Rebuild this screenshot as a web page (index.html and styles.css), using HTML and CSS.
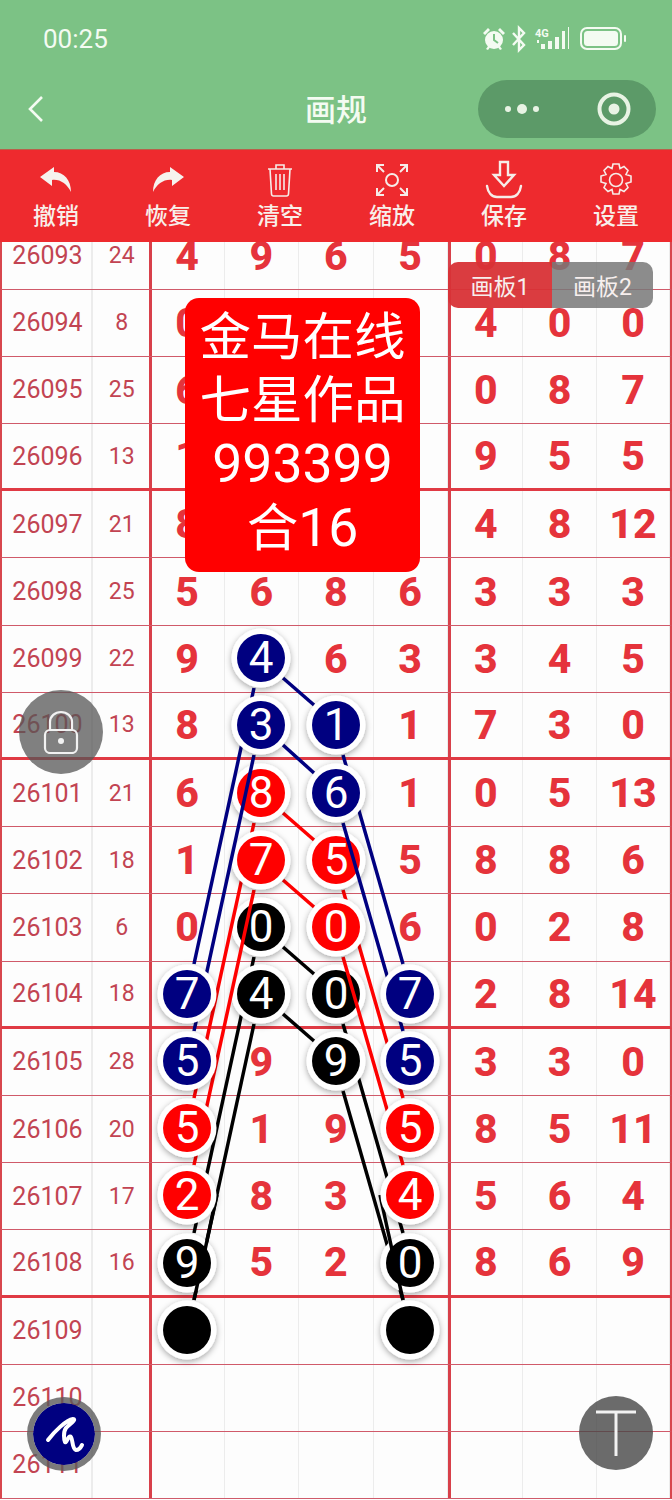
FILE: index.html
```html
<!DOCTYPE html>
<html>
<head>
<meta charset="UTF-8">
<title>画规</title>
<link rel="stylesheet" href="styles.css">
</head>
<body>
<div class="page">

	<div class="topbar">
		<div class="status">
			<span class="clock">00:25</span>
			<div class="status-icons">
				<svg width="146" height="28" viewBox="0 0 146 28">
					<g fill="#f4fbf2" stroke="none">
						<circle cx="13" cy="15" r="9"/>
						<path d="M2 8l5-5 2 2-5 5zM24 8l-5-5-2 2 5 5z"/>
						<path d="M5 24l3-4 2 1-3 4zM21 24l-3-4-2 1 3 4z"/>
					</g>
					<path d="M13 9v6l4 3" fill="none" stroke="#7cc285" stroke-width="2"/>
					<path d="M32 8l11 12-5 5V3l5 5-11 12" fill="none" stroke="#f4fbf2" stroke-width="2.4"/>
					<text x="54" y="12" class="net">4G</text>
					<g fill="#f4fbf2">
						<rect x="56" y="15" width="2" height="3"/>
						<rect x="60" y="19" width="4" height="5"/>
						<rect x="67" y="16" width="4" height="8"/>
						<rect x="74" y="12" width="4" height="12"/>
						<rect x="81" y="6" width="3" height="18"/>
						<rect x="87" y="2" width="1" height="22"/>
					</g>
					<rect x="100" y="3" width="40" height="21" rx="6" fill="none" stroke="#f4fbf2" stroke-width="2"/>
					<rect x="103" y="6" width="34" height="15" rx="3.5" fill="#f4fbf2"/>
					<rect x="143" y="10" width="2" height="7" rx="1" fill="#f4fbf2"/>
				</svg>
			</div>
		</div>
		<div class="nav">
			<svg class="back" width="18" height="28" viewBox="0 0 18 28"><path d="M15 2L3 14l12 12" fill="none" stroke="#f4fbf2" stroke-width="2.6"/></svg>
			<div class="nav-title">画规</div>
			<div class="capsule">
				<svg width="34" height="12" viewBox="0 0 34 12">
					<circle cx="3" cy="6" r="3" fill="#e8f3e4"/>
					<circle cx="17" cy="6" r="5" fill="#e8f3e4"/>
					<circle cx="31" cy="6" r="3" fill="#e8f3e4"/>
				</svg>
				<svg width="34" height="34" viewBox="0 0 34 34">
					<circle cx="17" cy="17" r="14.5" fill="none" stroke="#e8f3e4" stroke-width="4"/>
					<circle cx="17" cy="17" r="5.5" fill="#e8f3e4"/>
				</svg>
			</div>
		</div>
	</div>

	<div class="toolbar">
		<div class="tool">
			<div class="tool-icon"><svg width="34" height="26" viewBox="0 0 34 26"><path d="M15 0L1 10l12 9v-6c8-1 15 4 19 12C32 13 25 5 15 5z" fill="#f6f2ee"/></svg></div>
			<span>撤销</span>
		</div>
		<div class="tool">
			<div class="tool-icon"><svg width="34" height="26" viewBox="0 0 34 26"><path d="M19 0l14 10-12 9v-6C13 12 6 17 2 25 2 13 9 5 19 5z" fill="#f6f2ee"/></svg></div>
			<span>恢复</span>
		</div>
		<div class="tool">
			<div class="tool-icon"><svg width="26" height="34" viewBox="0 0 26 34" fill="none" stroke="#f6ece8" stroke-width="1.6"><path d="M1 6h24M9 6V2h8v4M3 6l1.500 25q.2 2 2 2h13q1.800 0 2-2L23 6M9 11v16M13 11v16M17 11v16"/></svg></div>
			<span>清空</span>
		</div>
		<div class="tool">
			<div class="tool-icon"><svg width="34" height="34" viewBox="0 0 34 34" fill="none" stroke="#f6ece8" stroke-width="2"><circle cx="17" cy="17" r="6"/><path d="M2 9V2h7M32 9V2h-7M2 25v7h7M32 25v7h-7M3 3l6 6M31 3l-6 6M3 31l6-6M31 31l-6-6"/></svg></div>
			<span>缩放</span>
		</div>
		<div class="tool">
			<div class="tool-icon"><svg width="38" height="40" viewBox="0 0 38 40" fill="none" stroke="#f6ece8" stroke-width="2.4"><path d="M15 2h8v13h6L19 26 9 15h6zM2 26c1 7 5 11 10 11h14c5 0 9-4 10-11" stroke-linecap="round"/></svg></div>
			<span>保存</span>
		</div>
		<div class="tool">
			<div class="tool-icon"><svg width="34" height="34" viewBox="0 0 34 34" fill="none" stroke="#f6ece8" stroke-width="1.6"><circle cx="17" cy="17" r="6.500"/><path d="M14 1h6l1 4.500 4-2 4 4-2 4 5 1.500v6l-5 1.500 2 4-4 4-4-2-1 4.500h-6l-1-4.500-4 2-4-4 2-4-5-1.500v-6l5-1.500-2-4 4-4 4 2z"/></svg></div>
			<span>设置</span>
		</div>
	</div>

	<div class="board">
		<div class="rows">
			<div class="row"><div class="no">26093</div><div class="sum">24</div><div class="d g">4</div><div class="d">9</div><div class="d">6</div><div class="d">5</div><div class="d g">0</div><div class="d">8</div><div class="d">7</div></div>
			<div class="row"><div class="no">26094</div><div class="sum">8</div><div class="d g">0</div><div class="d"></div><div class="d"></div><div class="d"></div><div class="d g">4</div><div class="d">0</div><div class="d">0</div></div>
			<div class="row"><div class="no">26095</div><div class="sum">25</div><div class="d g">6</div><div class="d"></div><div class="d"></div><div class="d"></div><div class="d g">0</div><div class="d">8</div><div class="d">7</div></div>
			<div class="row end"><div class="no">26096</div><div class="sum">13</div><div class="d g">1</div><div class="d"></div><div class="d"></div><div class="d"></div><div class="d g">9</div><div class="d">5</div><div class="d">5</div></div>
			<div class="row"><div class="no">26097</div><div class="sum">21</div><div class="d g">8</div><div class="d"></div><div class="d"></div><div class="d"></div><div class="d g">4</div><div class="d">8</div><div class="d">12</div></div>
			<div class="row"><div class="no">26098</div><div class="sum">25</div><div class="d g">5</div><div class="d">6</div><div class="d">8</div><div class="d">6</div><div class="d g">3</div><div class="d">3</div><div class="d">3</div></div>
			<div class="row"><div class="no">26099</div><div class="sum">22</div><div class="d g">9</div><div class="d"></div><div class="d">6</div><div class="d">3</div><div class="d g">3</div><div class="d">4</div><div class="d">5</div></div>
			<div class="row end"><div class="no">26100</div><div class="sum">13</div><div class="d g">8</div><div class="d"></div><div class="d"></div><div class="d">1</div><div class="d g">7</div><div class="d">3</div><div class="d">0</div></div>
			<div class="row"><div class="no">26101</div><div class="sum">21</div><div class="d g">6</div><div class="d"></div><div class="d"></div><div class="d">1</div><div class="d g">0</div><div class="d">5</div><div class="d">13</div></div>
			<div class="row"><div class="no">26102</div><div class="sum">18</div><div class="d g">1</div><div class="d"></div><div class="d"></div><div class="d">5</div><div class="d g">8</div><div class="d">8</div><div class="d">6</div></div>
			<div class="row"><div class="no">26103</div><div class="sum">6</div><div class="d g">0</div><div class="d"></div><div class="d"></div><div class="d">6</div><div class="d g">0</div><div class="d">2</div><div class="d">8</div></div>
			<div class="row end"><div class="no">26104</div><div class="sum">18</div><div class="d g"></div><div class="d"></div><div class="d"></div><div class="d"></div><div class="d g">2</div><div class="d">8</div><div class="d">14</div></div>
			<div class="row"><div class="no">26105</div><div class="sum">28</div><div class="d g"></div><div class="d">9</div><div class="d"></div><div class="d"></div><div class="d g">3</div><div class="d">3</div><div class="d">0</div></div>
			<div class="row"><div class="no">26106</div><div class="sum">20</div><div class="d g"></div><div class="d">1</div><div class="d">9</div><div class="d"></div><div class="d g">8</div><div class="d">5</div><div class="d">11</div></div>
			<div class="row"><div class="no">26107</div><div class="sum">17</div><div class="d g"></div><div class="d">8</div><div class="d">3</div><div class="d"></div><div class="d g">5</div><div class="d">6</div><div class="d">4</div></div>
			<div class="row end"><div class="no">26108</div><div class="sum">16</div><div class="d g"></div><div class="d">5</div><div class="d">2</div><div class="d"></div><div class="d g">8</div><div class="d">6</div><div class="d">9</div></div>
			<div class="row"><div class="no">26109</div><div class="sum"></div><div class="d g"></div><div class="d"></div><div class="d"></div><div class="d"></div><div class="d g"></div><div class="d"></div><div class="d"></div></div>
			<div class="row"><div class="no">26110</div><div class="sum"></div><div class="d g"></div><div class="d"></div><div class="d"></div><div class="d"></div><div class="d g"></div><div class="d"></div><div class="d"></div></div>
			<div class="row"><div class="no">26111</div><div class="sum"></div><div class="d g"></div><div class="d"></div><div class="d"></div><div class="d"></div><div class="d g"></div><div class="d"></div><div class="d"></div></div>
		</div>

		<svg class="marks" width="672" height="1258" viewBox="0 242 672 1258">
			<defs>
				<filter id="soft" x="-30%" y="-30%" width="160%" height="170%"><feDropShadow dx="0" dy="2" stdDeviation="3" flood-color="#000" flood-opacity=".35"/></filter>
				<g id="ring"><circle r="29.500" fill="#fff" filter="url(#soft)"/></g>
			</defs>

			<!-- black group -->
			<g class="lines" stroke="#000">
				<line x1="283" y1="947" x2="314" y2="974"/>
				<line x1="283" y1="1014" x2="314" y2="1041"/>
				<line x1="254" y1="957" x2="194" y2="1233"/>
				<line x1="254" y1="1024" x2="194" y2="1300"/>
				<line x1="343" y1="1024" x2="403" y2="1233"/>
				<line x1="343" y1="1091" x2="403" y2="1300"/>
			</g>
			<g class="ball" fill="#000">
				<use href="#ring" x="261" y="927"/><circle cx="261" cy="927" r="24"/><text x="261" y="942">0</text>
				<use href="#ring" x="336" y="994"/><circle cx="336" cy="994" r="24"/><text x="336" y="1009">0</text>
				<use href="#ring" x="261" y="994"/><circle cx="261" cy="994" r="24"/><text x="261" y="1009">4</text>
				<use href="#ring" x="336" y="1061"/><circle cx="336" cy="1061" r="24"/><text x="336" y="1076">9</text>
				<use href="#ring" x="187" y="1263"/><circle cx="187" cy="1263" r="24"/><text x="187" y="1278">9</text>
				<use href="#ring" x="410" y="1263"/><circle cx="410" cy="1263" r="24"/><text x="410" y="1278">0</text>
				<use href="#ring" x="187" y="1330"/><circle cx="187" cy="1330" r="24"/>
				<use href="#ring" x="410" y="1330"/><circle cx="410" cy="1330" r="24"/>
			</g>
			<g class="lines" stroke="#000">
				<line x1="217" y1="1195" x2="194" y2="1300"/>
				<line x1="380" y1="1195" x2="403" y2="1300"/>
			</g>

			<!-- red group -->
			<g class="lines" stroke="#f00">
				<line x1="283" y1="813" x2="314" y2="840"/>
				<line x1="283" y1="880" x2="314" y2="907"/>
				<line x1="254" y1="823" x2="194" y2="1098"/>
				<line x1="254" y1="890" x2="194" y2="1165"/>
				<line x1="343" y1="890" x2="403" y2="1098"/>
				<line x1="343" y1="957" x2="403" y2="1165"/>
			</g>
			<g class="ball" fill="#f00">
				<use href="#ring" x="261" y="793"/><circle cx="261" cy="793" r="24"/><text x="261" y="808">8</text>
				<use href="#ring" x="261" y="860"/><circle cx="261" cy="860" r="24"/><text x="261" y="875">7</text>
				<use href="#ring" x="336" y="860"/><circle cx="336" cy="860" r="24"/><text x="336" y="875">5</text>
				<use href="#ring" x="336" y="927"/><circle cx="336" cy="927" r="24"/><text x="336" y="942">0</text>
				<use href="#ring" x="187" y="1128"/><circle cx="187" cy="1128" r="24"/><text x="187" y="1143">5</text>
				<use href="#ring" x="410" y="1128"/><circle cx="410" cy="1128" r="24"/><text x="410" y="1143">5</text>
				<use href="#ring" x="187" y="1195"/><circle cx="187" cy="1195" r="24"/><text x="187" y="1210">2</text>
				<use href="#ring" x="410" y="1195"/><circle cx="410" cy="1195" r="24"/><text x="410" y="1210">4</text>
			</g>

			<!-- blue group -->
			<g class="lines" stroke="#000080">
				<line x1="283" y1="678" x2="314" y2="705"/>
				<line x1="283" y1="745" x2="314" y2="773"/>
				<line x1="254" y1="688" x2="194" y2="964"/>
				<line x1="254" y1="755" x2="194" y2="1031"/>
				<line x1="343" y1="755" x2="403" y2="964"/>
				<line x1="343" y1="823" x2="403" y2="1031"/>
			</g>
			<g class="ball" fill="#000080">
				<use href="#ring" x="261" y="658"/><circle cx="261" cy="658" r="24"/><text x="261" y="673">4</text>
				<use href="#ring" x="261" y="725"/><circle cx="261" cy="725" r="24"/><text x="261" y="740">3</text>
				<use href="#ring" x="336" y="725"/><circle cx="336" cy="725" r="24"/><text x="336" y="740">1</text>
				<use href="#ring" x="336" y="793"/><circle cx="336" cy="793" r="24"/><text x="336" y="808">6</text>
				<use href="#ring" x="187" y="994"/><circle cx="187" cy="994" r="24"/><text x="187" y="1009">7</text>
				<use href="#ring" x="410" y="994"/><circle cx="410" cy="994" r="24"/><text x="410" y="1009">7</text>
				<use href="#ring" x="187" y="1061"/><circle cx="187" cy="1061" r="24"/><text x="187" y="1076">5</text>
				<use href="#ring" x="410" y="1061"/><circle cx="410" cy="1061" r="24"/><text x="410" y="1076">5</text>
			</g>
		</svg>

		<div class="tabs">
			<div class="tab on">画板1</div>
			<div class="tab">画板2</div>
		</div>

		<div class="note">金马在线<br>七星作品<br><span class="big">993399</span><br>合<span class="big">16</span></div>

		<div class="fab lock">
			<svg width="36" height="44" viewBox="0 0 36 44" fill="none" stroke="#f2f2f2" stroke-width="2.2"><path d="M7 20v-8a11 10 0 0 1 22 0v8"/><rect x="2" y="20" width="32" height="23" rx="5"/><circle cx="18" cy="31" r="3" fill="#f2f2f2" stroke="none"/></svg>
		</div>
		<div class="fab pen">
			<svg width="44" height="44" viewBox="0 0 44 44" fill="none" stroke="#fff" stroke-width="4" stroke-linecap="round" stroke-linejoin="round"><path d="M6 28C12 20 24 8 31 7c4 0-3 5-7 9-3 4-2 12-1 14 1 2 4-8 6-5 2 3 1 12 5 13 3 0 5-3 6-5"/></svg>
		</div>
		<div class="fab top">
			<svg width="44" height="48" viewBox="0 0 44 48" fill="none" stroke="#f2f2f2" stroke-width="3"><path d="M2 3h40M22 3v44"/></svg>
		</div>
	</div>

</div>
</body>
</html>
```

FILE: styles.css
```css
* {
	box-sizing: border-box;
}

body {
	margin: 0;
	background: #fdfdfd;
	font-family: "Roboto", "Noto Sans CJK SC", sans-serif;
}

.page {
	width: 672px;
	height: 1500px;
	overflow: hidden;
	display: flex;
	flex-direction: column;
}

.topbar {
	height: 150px;
	background: #7cc285;
	border-bottom: 1px solid #b8604a;
	color: #f4fbf2;
	flex: none;
}

.status {
	height: 80px;
	padding: 20px 45px 0 43px;
	display: flex;
	justify-content: space-between;
	align-items: flex-start;
}

.clock {
	font-size: 26px;
	line-height: 38px;
}

.status-icons {
	padding-top: 5px;
}

.net {
	font: bold 11px "Roboto", sans-serif;
	fill: #f4fbf2;
}

.nav {
	height: 58px;
	position: relative;
	display: flex;
	align-items: center;
	justify-content: space-between;
	padding: 0 16px 0 27px;
}

.nav-title {
	position: absolute;
	left: 0;
	right: 0;
	top: 10px;
	text-align: center;
	font-size: 31px;
	font-weight: 500;
	line-height: 42px;
}

.capsule {
	width: 178px;
	height: 58px;
	border-radius: 29px;
	background: #5c9a68;
	display: flex;
	align-items: center;
	justify-content: space-between;
	padding: 0 25px 0 27px;
}

.toolbar {
	height: 92px;
	flex: none;
	background: #ee2a2e;
	display: grid;
	grid-template-columns: repeat(6, 112px);
}

.tool {
	display: flex;
	flex-direction: column;
	align-items: center;
	color: #f8efea;
	font-size: 23px;
	font-weight: 500;
	line-height: 30px;
	padding-top: 10px;
}

.tool-icon {
	height: 40px;
	margin-bottom: 2px;
	display: flex;
	align-items: center;
	justify-content: center;
}

.board {
	flex: 1;
	position: relative;
	overflow: hidden;
}

.rows {
	margin-top: -19.500px;
	width: 672px;
}

.row {
	height: 67.2px;
	display: grid;
	grid-template-columns: 91px 55.500px 76px 74.500px 74.500px 74px 75.500px 74px 73px;
	border-bottom: 1px solid #d05a6a;
	border-left: 2px solid #d8474e;
	border-right: 2px solid #d8474e;
	width: 672px;
}

.row.end {
	border-bottom: 3px solid #e03a44;
}

.no,
.sum,
.d {
	display: flex;
	align-items: center;
	justify-content: center;
	border-right: 2px solid #ececec;
}

.no {
	font-size: 25px;
	color: #c24452;
	padding-left: 2px;
}

.sum {
	font-size: 23px;
	color: #c24452;
	border-right: 0;
	padding-left: 2px;
}

.d {
	font-size: 41px;
	font-weight: 800;
	color: #e5333b;
	border-right-width: 1px;
}

.d.g {
	border-left: 3px solid #d8404a;
	padding-right: 1px;
}

.marks {
	position: absolute;
	left: 0;
	top: 0;
}

.lines line {
	stroke-width: 3.500;
}

.ball text {
	font: 400 44px "Roboto", sans-serif;
	fill: #fff;
	text-anchor: middle;
}

.tabs {
	position: absolute;
	left: 448px;
	top: 20px;
	width: 205px;
	height: 46px;
	display: flex;
	border-radius: 10px;
	overflow: hidden;
	color: #f7efee;
	font-size: 23px;
}

.tab {
	flex: 1;
	background: rgba(120, 120, 120, .85);
	display: flex;
	align-items: center;
	justify-content: center;
}

.tab.on {
	flex: none;
	width: 104px;
	background: rgba(216, 50, 54, .95);
}

.note {
	position: absolute;
	left: 185px;
	top: 56px;
	width: 235px;
	height: 274px;
	padding-top: 8px;
	background: #f00;
	border-radius: 14px;
	color: #fff;
	font-size: 51.500px;
	line-height: 63px;
	text-align: center;
}

.big {
	font-size: 53.500px;
}

.fab {
	position: absolute;
	border-radius: 50%;
	display: flex;
	align-items: center;
	justify-content: center;
}

.lock {
	left: 19px;
	top: 448px;
	width: 84px;
	height: 84px;
	background: rgba(85, 85, 85, .75);
}

.pen {
	left: 27px;
	top: 1155px;
	width: 74px;
	height: 74px;
	background: #000080;
	background-clip: padding-box;
	border: 6px solid rgba(90, 90, 90, .8);
}

.top {
	left: 579px;
	top: 1154px;
	width: 74px;
	height: 74px;
	background: rgba(70, 70, 70, .8);
}
```
